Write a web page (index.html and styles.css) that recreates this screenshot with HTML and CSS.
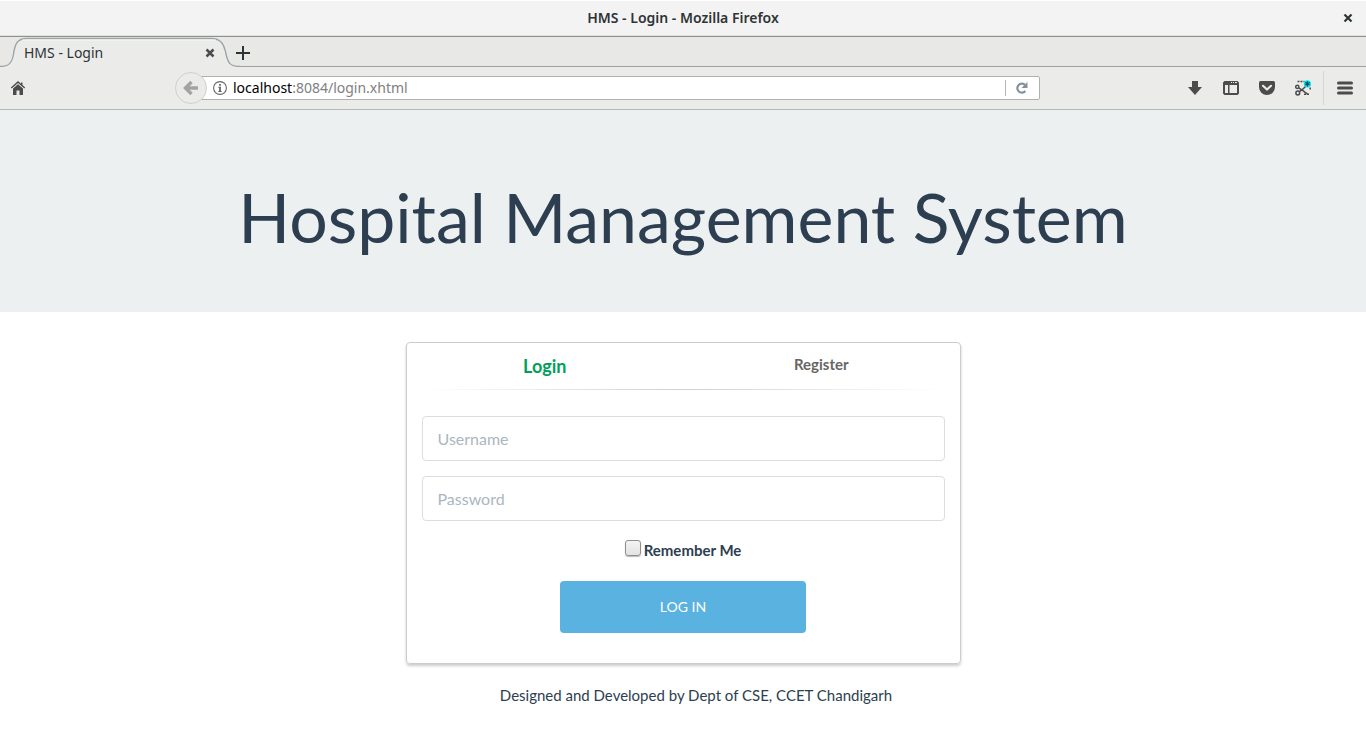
FILE: index.html
```html
<!DOCTYPE html>
<html lang="en">
<head>
<meta charset="utf-8">
<title>HMS - Login</title>
<link rel="stylesheet" href="styles.css">
</head>
<body>
<div class="titlebar">
  <span class="titlebar-text">HMS - Login - Mozilla Firefox</span>
  <button class="icon-button window-close" type="button" aria-label="Close window">
    <svg width="10" height="10" viewBox="0 0 10 10"><path d="M1.5 1.5l7 7M8.5 1.5l-7 7" stroke="#2e3436" stroke-width="2.2"/></svg>
  </button>
</div>

<div class="tabstrip">
  <div class="tab">
    <svg class="tab-shape" width="240" height="30" viewBox="0 0 240 30">
      <path d="M0 29.5C9 29.5 12 26 13.5 17C15 7 17 1.5 27 1.5H211C221 1.5 224 7 226 17C228 26 230 29.5 240 29.5V30H0Z" fill="#ebebea"/>
      <path d="M0 29.5C9 29.5 12 26 13.5 17C15 7 17 1.5 27 1.5H211C221 1.5 224 7 226 17C228 26 230 29.5 240 29.5" fill="none" stroke="#9ba2a8" stroke-width="1.3"/>
      <path d="M22 3H216" stroke="#f8f8f8"/>
    </svg>
    <span class="tab-title">HMS - Login</span>
    <button class="icon-button tab-close" type="button" aria-label="Close tab">
      <svg width="10" height="10" viewBox="0 0 10 10"><path d="M1.5 1.5l7 7M8.5 1.5l-7 7" stroke="#4a4e50" stroke-width="2.5"/></svg>
    </button>
  </div>
  <button class="icon-button new-tab" type="button" aria-label="New tab">
    <svg width="14" height="14" viewBox="0 0 14 14"><path d="M7 0v14M0 7h14" stroke="#2e3436" stroke-width="2"/></svg>
  </button>
</div>

<div class="toolbar">
  <button class="icon-button" type="button" aria-label="Home">
    <svg width="16" height="16" viewBox="0 0 16 16" fill="#4c4c4c"><path d="M8 1L0.8 7.6l.9.9L8 2.9l6.3 5.600.9-.9L12.500 5V2.500H11v1.200z"/><path d="M3 8.600L8 4.200l5 4.400V15H9.500v-4.500h-3V15H3z"/></svg>
  </button>
  <div class="address">
    <button class="back" type="button" aria-label="Back">
      <svg width="16" height="16" viewBox="0 0 16 16"><path d="M8.5 2L2.5 8l6 6M3 8h12" fill="none" stroke="#a3a3a3" stroke-width="3.4"/></svg>
    </button>
    <div class="urlbar">
      <svg width="14" height="14" viewBox="0 0 14 14"><circle cx="7" cy="7" r="6.4" fill="none" stroke="#666" stroke-width="1.1"/><path d="M6.100 3h1.800v1.700H6.100zM5.300 5.800h2.600V10h.8v1H5.300v-1h.8V6.800h-.8z" fill="#666"/></svg>
      <span class="url"><b>localhost</b>:8084/login.xhtml</span>
      <button class="icon-button reload" type="button" aria-label="Reload">
        <svg width="14" height="14" viewBox="0 0 14 14"><path d="M10.300 10A4.500 4.500 0 1 1 10.200 4.200" fill="none" stroke="#84919d" stroke-width="2.200"/><path d="M12.500 1v6h-6z" fill="#84919d"/></svg>
      </button>
    </div>
  </div>
  <div class="tools">
    <button class="icon-button" type="button" aria-label="Downloads">
      <svg width="16" height="16" viewBox="0 0 16 16"><path d="M5 1h6v6h4l-7 8-7-8h4z" fill="#4c4c4c"/></svg>
    </button>
    <button class="icon-button" type="button" aria-label="Sidebar">
      <svg width="16" height="16" viewBox="0 0 16 16"><path fill-rule="evenodd" d="M1.500 1h13L16 2.500v11L14.500 15h-13L0 13.500v-11zM2 5v8h3V5zM6.500 5v8H14V5zM8 2v1h1V2zM10 2v1h1V2zM12 2v1h2V2z" fill="#4c4c4c"/></svg>
    </button>
    <button class="icon-button" type="button" aria-label="Pocket">
      <svg width="16" height="16" viewBox="0 0 16 16"><path d="M1.500 1h13Q16 1 16 2.500V7A8 8 0 0 1 0 7V2.500Q0 1 1.500 1z" fill="#4c4c4c"/><path d="M4 5.800l4 3.700 4-3.700" fill="none" stroke="#ebebea" stroke-width="2.200" stroke-linecap="round" stroke-linejoin="round"/></svg>
    </button>
    <button class="icon-button" type="button" aria-label="Screenshot">
      <svg width="16" height="16" viewBox="0 0 16 16"><path d="M2.500 1.500h7" stroke="#4c4c4c" stroke-width="1.500" stroke-dasharray="2 1"/><path d="M15.200 7.500v3M9 14.200h5" stroke="#4c4c4c" stroke-width="1.500" stroke-dasharray="2 1"/><g fill="none" stroke="#4c4c4c" stroke-width="1.500"><circle cx="2.300" cy="6.800" r="1.600"/><circle cx="2.800" cy="13" r="1.900"/><path d="M3.600 7.800l4 2.500 5.200 4M4.300 11.600L7.500 9.500l4-4"/></g><circle cx="12.400" cy="3.800" r="3.600" fill="#00e5f5"/><path d="M12.400 1.200v5.200M10.200 2.500l4.400 2.600M14.600 2.500l-4.400 2.600" stroke="#15505a" stroke-width="1.200"/></svg>
    </button>
    <span class="separator"></span>
    <button class="icon-button" type="button" aria-label="Menu">
      <svg width="16" height="16" viewBox="0 0 16 16"><path d="M1.500 3h13M1.500 8h13M1.500 13h13" stroke="#4c4c4c" stroke-width="3" stroke-linecap="round"/></svg>
    </button>
  </div>
</div>

<header class="hero">
  <h1>Hospital Management System</h1>
</header>

<main>
  <section class="card">
    <nav class="card-tabs">
      <a class="active" href="#login">Login</a>
      <a href="#register">Register</a>
    </nav>
    <hr class="divider">
    <form class="login-form" id="login">
      <input class="field" type="text" placeholder="Username" aria-label="Username">
      <input class="field" type="password" placeholder="Password" aria-label="Password">
      <div class="remember">
        <input type="checkbox" id="remember">
        <label for="remember">Remember Me</label>
      </div>
      <button class="submit" type="submit">LOG IN</button>
    </form>
  </section>
</main>
<footer>Designed and Developed by Dept of CSE, CCET Chandigarh</footer>
</body>
</html>
```
FILE: styles.css
```css
* {
  box-sizing: border-box;
}

body {
  margin: 0;
  background: #fff;
  color: #2c3e50;
  font: 15px/21px Lato, sans-serif;
}

button {
  font: inherit;
}

svg {
  display: block;
}

.icon-button {
  display: block;
  padding: 0;
  border: 0;
  background: none;
}

/* Browser window */
.titlebar {
  position: relative;
  display: flex;
  align-items: center;
  justify-content: center;
  height: 37px;
  border-bottom: 1px solid #8f928b;
  background: #f3f3f3;
  box-shadow: inset 0 1px #fff, inset 0 -1px #e0e0de;
  color: #2e3436;
  font: 600 14px/20px "Noto Sans", sans-serif;
}

.window-close {
  position: absolute;
  right: 13px;
}

.tabstrip {
  display: flex;
  align-items: center;
  height: 30px;
  border-bottom: 1px solid #a0a0a0;
  background: #e8e8e7;
}

.tab {
  position: relative;
  display: flex;
  flex: 0 0 236px;
  align-items: center;
  justify-content: space-between;
  height: 30px;
  padding: 2px 21px 0 24px;
  color: #2e3436;
  font: 14px/20px "Noto Sans", sans-serif;
}

.tab-shape {
  position: absolute;
  top: 0;
  left: 0;
}

.tab-title,
.tab-close {
  position: relative;
}

.new-tab {
  position: relative;
  padding-top: 2px;
}

.toolbar {
  display: flex;
  align-items: center;
  justify-content: space-between;
  height: 43px;
  padding: 0 13px 0 10px;
  border-bottom: 1px solid #b5b8b8;
  background: #ebebea;
}

.address {
  display: flex;
  flex: 0 1 865px;
  align-items: center;
  margin-left: 2px;
}

.back {
  z-index: 1;
  display: flex;
  flex: none;
  align-items: center;
  justify-content: center;
  width: 32px;
  height: 32px;
  margin-right: -8px;
  padding: 0;
  border: 1px solid #cfcfcf;
  border-radius: 50%;
  background: #ebebea;
}

.urlbar {
  display: flex;
  flex: 1;
  align-items: center;
  gap: 6px;
  height: 24px;
  padding-left: 13px;
  border: 1px solid #b1b1ae;
  border-radius: 2px;
  background: #fff;
  color: #808080;
  font: 14px/20px "Noto Sans", sans-serif;
}

.url {
  flex: 1;
}

.url b {
  color: #000;
  font-weight: 400;
}

.reload {
  padding: 1px 10px 1px 9px;
  border-left: 1px solid #b5b5b5;
}

.tools {
  display: flex;
  align-items: center;
  gap: 20px;
}

.separator {
  width: 1px;
  height: 34px;
  margin: 0 -7px 0 -8px;
  background: #d6d6d6;
}

/* Page */
.hero {
  padding: 69px 15px 58px;
  background: #ecf0f1;
  text-align: center;
}

.hero h1 {
  margin: 0;
  font-size: 68px;
  font-weight: 400;
  line-height: 75px;
}

.card {
  width: 100%;
  max-width: 555px;
  margin: 30px auto 0;
  padding-bottom: 30px;
  border: 1px solid #ccc;
  border-radius: 4px;
  box-shadow: 0 2px 3px rgba(0, 0, 0, 0.2);
}

.card-tabs {
  display: grid;
  grid-template-columns: 1fr 1fr;
  padding-top: 11px;
  text-align: center;
}

.card-tabs a {
  color: #666;
  font-weight: 700;
  text-decoration: none;
}

.card-tabs .active {
  color: #029f5b;
  font-size: 18px;
  line-height: 25px;
}

.divider {
  height: 1px;
  margin: 10px 15px 26px;
  border: 0;
  background: linear-gradient(to right, transparent, #d0d0d0, transparent);
}

.login-form {
  display: flex;
  flex-direction: column;
  gap: 15px;
  padding: 0 15px;
}

.field {
  width: 100%;
  height: 45px;
  padding: 0 15px;
  border: 1px solid #ddd;
  border-radius: 4px;
  background: #fff;
  color: #2c3e50;
  font: 16px/22px Lato, sans-serif;
}

.field::placeholder {
  color: #acb6c0;
}

.remember {
  display: flex;
  justify-content: center;
  gap: 3px;
  padding-top: 4px;
  margin-bottom: 5px;
}

.remember input {
  width: 16px;
  height: 16px;
  margin: 0;
  border: 1px solid #8e8e8e;
  border-radius: 3px;
  background: linear-gradient(#f4f4f4, #e2e2e2);
  box-shadow: 0 1px 1px #bbb;
  appearance: none;
}

.remember input:checked {
  background: #59b2e0;
}

.remember label {
  font-weight: 700;
}

.submit {
  align-self: center;
  width: 47%;
  height: 52px;
  padding: 0 0 2px;
  border: 0;
  border-radius: 4px;
  background: #59b2e0;
  color: #fff;
  font-size: 14px;
}

footer {
  padding: 21px 0 20px 26px;
  text-align: center;
}
```
